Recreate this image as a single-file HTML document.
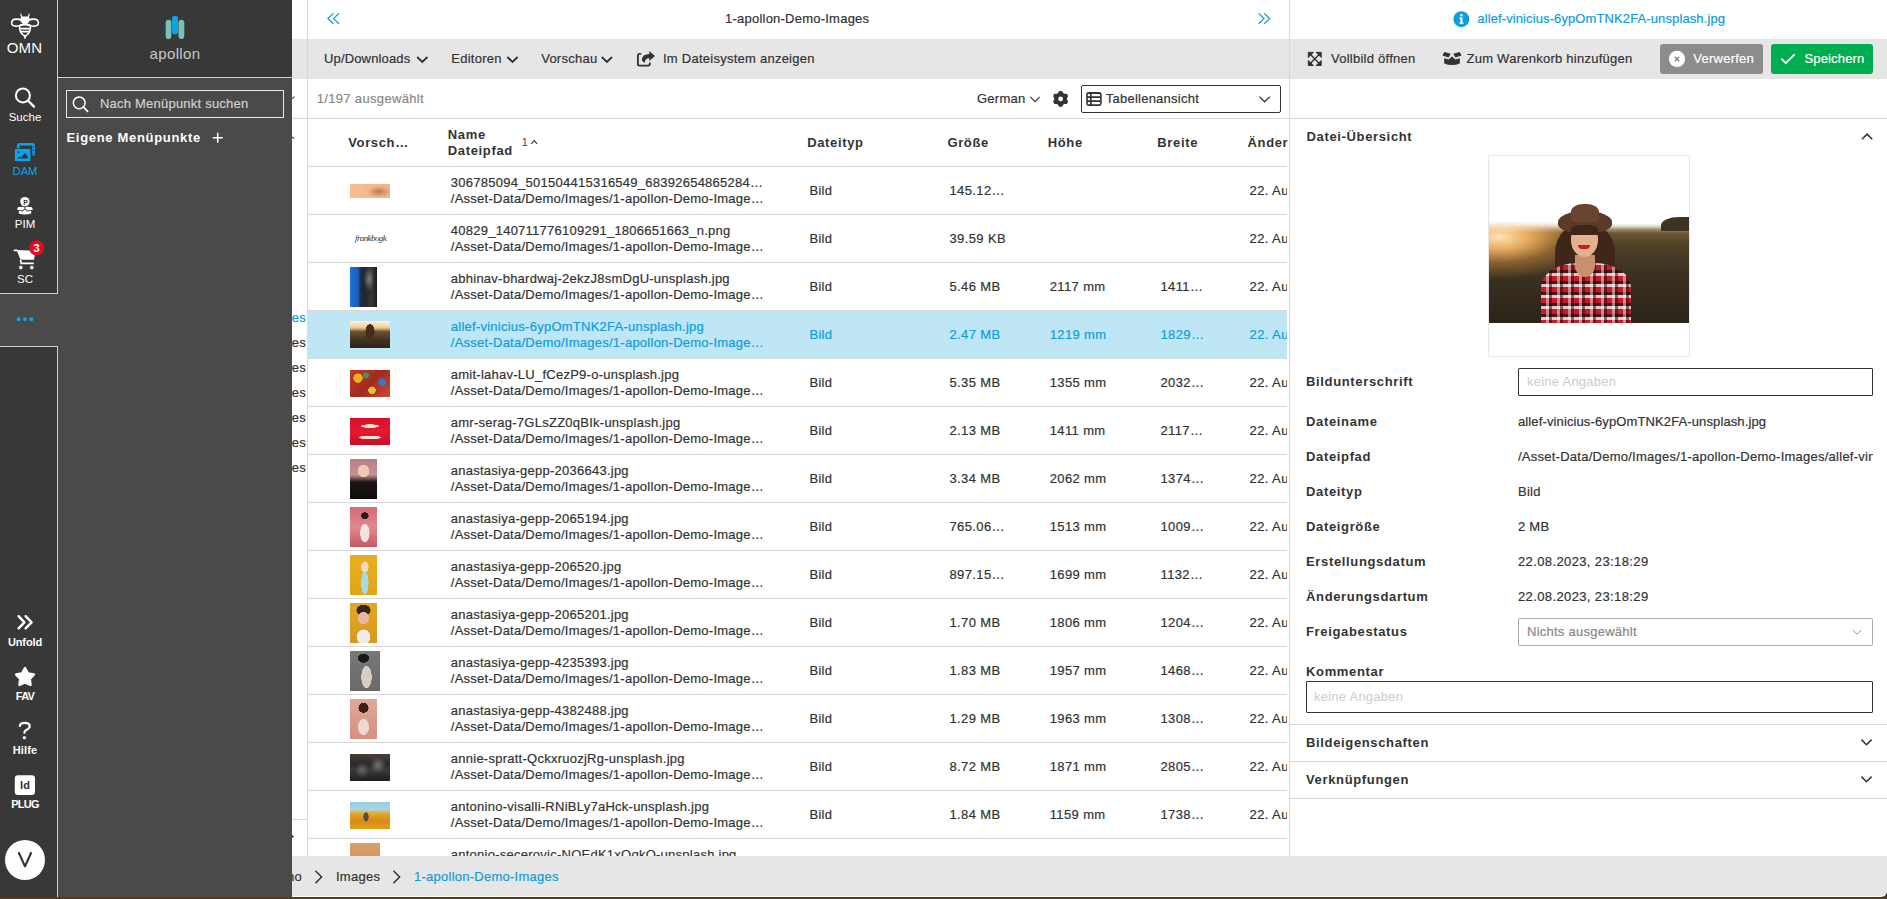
<!DOCTYPE html><html><head><meta charset="utf-8"><style>
*{box-sizing:border-box;margin:0;padding:0}
html,body{width:1887px;height:899px;overflow:hidden;background:#5a3822;font-family:"Liberation Sans",sans-serif;}
.a{position:absolute;white-space:nowrap;line-height:16px}
.t{font-size:13px;letter-spacing:.25px;color:#333;-webkit-text-stroke:.2px currentColor}
.n{font-size:13px;letter-spacing:.38px;color:#333;-webkit-text-stroke:.2px currentColor}
.b{font-size:13px;font-weight:bold;letter-spacing:.65px;color:#333}
.w{color:#fff}
.bl{color:#0e9ddd}
.g{color:#888}
svg{position:absolute;overflow:visible}
</style></head><body><div class="a" style="left:292px;top:0px;width:1595px;height:897px;background:#fff;border-bottom-right-radius:6px"></div>
<div class="a" style="left:292px;top:39px;width:1595px;height:40px;background:#e6e6e6;"></div>
<div class="a" style="left:292px;top:856px;width:1595px;height:40px;background:#e6e6e6;border-bottom-right-radius:6px"></div>
<div class="a" style="left:307px;top:0px;width:1px;height:856px;background:#d8d8d8;"></div>
<div class="a" style="left:1289px;top:0px;width:1px;height:856px;background:#d8d8d8;"></div>
<div class="a" style="left:292px;top:118px;width:1595px;height:1px;background:#d8d8d8;"></div>
<div class="a" style="left:307px;top:310px;width:980px;height:48px;background:#bee6f5;"></div>
<div class="a" style="left:307px;top:166px;width:980px;height:1px;background:#d8d8d8;"></div>
<div class="a" style="left:307px;top:214px;width:980px;height:1px;background:#d8d8d8;"></div>
<div class="a" style="left:307px;top:262px;width:980px;height:1px;background:#d8d8d8;"></div>
<div class="a" style="left:307px;top:310px;width:980px;height:1px;background:#d8d8d8;"></div>
<div class="a" style="left:307px;top:358px;width:980px;height:1px;background:#d8d8d8;"></div>
<div class="a" style="left:307px;top:406px;width:980px;height:1px;background:#d8d8d8;"></div>
<div class="a" style="left:307px;top:454px;width:980px;height:1px;background:#d8d8d8;"></div>
<div class="a" style="left:307px;top:502px;width:980px;height:1px;background:#d8d8d8;"></div>
<div class="a" style="left:307px;top:550px;width:980px;height:1px;background:#d8d8d8;"></div>
<div class="a" style="left:307px;top:598px;width:980px;height:1px;background:#d8d8d8;"></div>
<div class="a" style="left:307px;top:646px;width:980px;height:1px;background:#d8d8d8;"></div>
<div class="a" style="left:307px;top:694px;width:980px;height:1px;background:#d8d8d8;"></div>
<div class="a" style="left:307px;top:742px;width:980px;height:1px;background:#d8d8d8;"></div>
<div class="a" style="left:307px;top:790px;width:980px;height:1px;background:#d8d8d8;"></div>
<div class="a" style="left:307px;top:838px;width:980px;height:1px;background:#d8d8d8;"></div>
<div class="a" style="left:292px;top:819px;width:15px;height:1px;background:#d8d8d8;"></div>
<div class="a" style="left:0px;top:0px;width:58px;height:294px;background:#383838;border-right:1px solid #cfcfcf;border-bottom:1px solid #cfcfcf"></div>
<div class="a" style="left:58px;top:78px;width:234px;height:819px;background:#4a4a4a;"></div>
<div class="a" style="left:0px;top:294px;width:58px;height:52px;background:#4a4a4a;"></div>
<div class="a" style="left:58px;top:0px;width:234px;height:77px;background:#383838;"></div>
<div class="a" style="left:58px;top:77px;width:234px;height:1px;background:#cfcfcf;"></div>
<div class="a" style="left:0px;top:346px;width:58px;height:551px;background:#383838;border-right:1px solid #cfcfcf;border-top:1px solid #cfcfcf"></div>
<div class="a" style="left:66px;top:90px;width:218px;height:28px;background:transparent;border:1px solid #e8e8e8"></div>
<div class="a t" style="left:100px;top:95.5px;color:#d0d0d0;letter-spacing:.22px">Nach Menüpunkt suchen</div>
<div class="a b w" style="left:66.5px;top:129.5px;letter-spacing:.68px">Eigene Menüpunkte</div>
<div class="a t" style="left:725px;top:10.5px;letter-spacing:.23px">1-apollon-Demo-Images</div>
<div class="a t" style="left:324px;top:50.5px;letter-spacing:.15px">Up/Downloads</div>
<div class="a t" style="left:451.3px;top:50.5px;">Editoren</div>
<div class="a t" style="left:541.2px;top:50.5px;">Vorschau</div>
<div class="a t" style="left:663px;top:50.5px;">Im Dateisystem anzeigen</div>
<div class="a t g" style="left:316.7px;top:90.5px;letter-spacing:.34px">1/197 ausgewählt</div>
<div class="a t" style="left:977px;top:90.5px;">German</div>
<div class="a" style="left:1081px;top:85px;width:200px;height:28px;background:transparent;border:1px solid #333;border-radius:2px"></div>
<div class="a t" style="left:1105.7px;top:90.5px;">Tabellenansicht</div>
<div class="a b" style="left:348.2px;top:134.5px;">Vorsch…</div>
<div class="a b" style="left:447.8px;top:126.5px;">Name</div>
<div class="a b" style="left:447.8px;top:142.5px;">Dateipfad</div>
<div class="a" style="left:522px;top:137px;font-size:10px;color:#333;line-height:12px">1</div>
<div class="a b" style="left:807.2px;top:134.5px;">Dateityp</div>
<div class="a b" style="left:947.4px;top:134.5px;">Größe</div>
<div class="a b" style="left:1047.7px;top:134.5px;">Höhe</div>
<div class="a b" style="left:1157.3px;top:134.5px;">Breite</div>
<div class="a b" style="left:1247.5px;top:134.5px;width:40px;overflow:hidden">Änder</div>
<div class="a" style="left:307px;top:166px;width:980px;height:690px;overflow:hidden">
<div class="a t" style="left:143.8px;top:8.5px">306785094_501504415316549_68392654865284…</div>
<div class="a t" style="left:143.8px;top:24.5px">/Asset-Data/Demo/Images/1-apollon-Demo-Image…</div>
<div class="a t" style="left:502.5px;top:16.5px">Bild</div>
<div class="a n" style="left:642.5px;top:16.5px">145.12…</div>
<div class="a n" style="left:942.5999999999999px;top:16.5px">22. Au</div>
<div class="a t" style="left:143.8px;top:56.5px">40829_140711776109291_1806651663_n.png</div>
<div class="a t" style="left:143.8px;top:72.5px">/Asset-Data/Demo/Images/1-apollon-Demo-Image…</div>
<div class="a t" style="left:502.5px;top:64.5px">Bild</div>
<div class="a n" style="left:642.5px;top:64.5px">39.59 KB</div>
<div class="a n" style="left:942.5999999999999px;top:64.5px">22. Au</div>
<div class="a t" style="left:143.8px;top:104.5px">abhinav-bhardwaj-2ekzJ8smDgU-unsplash.jpg</div>
<div class="a t" style="left:143.8px;top:120.5px">/Asset-Data/Demo/Images/1-apollon-Demo-Image…</div>
<div class="a t" style="left:502.5px;top:112.5px">Bild</div>
<div class="a n" style="left:642.5px;top:112.5px">5.46 MB</div>
<div class="a n" style="left:742.7px;top:112.5px">2117 mm</div>
<div class="a n" style="left:853.5px;top:112.5px">1411…</div>
<div class="a n" style="left:942.5999999999999px;top:112.5px">22. Au</div>
<div class="a t bl" style="left:143.8px;top:152.5px">allef-vinicius-6ypOmTNK2FA-unsplash.jpg</div>
<div class="a t bl" style="left:143.8px;top:168.5px">/Asset-Data/Demo/Images/1-apollon-Demo-Image…</div>
<div class="a t bl" style="left:502.5px;top:160.5px">Bild</div>
<div class="a n bl" style="left:642.5px;top:160.5px">2.47 MB</div>
<div class="a n bl" style="left:742.7px;top:160.5px">1219 mm</div>
<div class="a n bl" style="left:853.5px;top:160.5px">1829…</div>
<div class="a n bl" style="left:942.5999999999999px;top:160.5px">22. Au</div>
<div class="a t" style="left:143.8px;top:200.5px">amit-lahav-LU_fCezP9-o-unsplash.jpg</div>
<div class="a t" style="left:143.8px;top:216.5px">/Asset-Data/Demo/Images/1-apollon-Demo-Image…</div>
<div class="a t" style="left:502.5px;top:208.5px">Bild</div>
<div class="a n" style="left:642.5px;top:208.5px">5.35 MB</div>
<div class="a n" style="left:742.7px;top:208.5px">1355 mm</div>
<div class="a n" style="left:853.5px;top:208.5px">2032…</div>
<div class="a n" style="left:942.5999999999999px;top:208.5px">22. Au</div>
<div class="a t" style="left:143.8px;top:248.5px">amr-serag-7GLsZZ0qBIk-unsplash.jpg</div>
<div class="a t" style="left:143.8px;top:264.5px">/Asset-Data/Demo/Images/1-apollon-Demo-Image…</div>
<div class="a t" style="left:502.5px;top:256.5px">Bild</div>
<div class="a n" style="left:642.5px;top:256.5px">2.13 MB</div>
<div class="a n" style="left:742.7px;top:256.5px">1411 mm</div>
<div class="a n" style="left:853.5px;top:256.5px">2117…</div>
<div class="a n" style="left:942.5999999999999px;top:256.5px">22. Au</div>
<div class="a t" style="left:143.8px;top:296.5px">anastasiya-gepp-2036643.jpg</div>
<div class="a t" style="left:143.8px;top:312.5px">/Asset-Data/Demo/Images/1-apollon-Demo-Image…</div>
<div class="a t" style="left:502.5px;top:304.5px">Bild</div>
<div class="a n" style="left:642.5px;top:304.5px">3.34 MB</div>
<div class="a n" style="left:742.7px;top:304.5px">2062 mm</div>
<div class="a n" style="left:853.5px;top:304.5px">1374…</div>
<div class="a n" style="left:942.5999999999999px;top:304.5px">22. Au</div>
<div class="a t" style="left:143.8px;top:344.5px">anastasiya-gepp-2065194.jpg</div>
<div class="a t" style="left:143.8px;top:360.5px">/Asset-Data/Demo/Images/1-apollon-Demo-Image…</div>
<div class="a t" style="left:502.5px;top:352.5px">Bild</div>
<div class="a n" style="left:642.5px;top:352.5px">765.06…</div>
<div class="a n" style="left:742.7px;top:352.5px">1513 mm</div>
<div class="a n" style="left:853.5px;top:352.5px">1009…</div>
<div class="a n" style="left:942.5999999999999px;top:352.5px">22. Au</div>
<div class="a t" style="left:143.8px;top:392.5px">anastasiya-gepp-206520.jpg</div>
<div class="a t" style="left:143.8px;top:408.5px">/Asset-Data/Demo/Images/1-apollon-Demo-Image…</div>
<div class="a t" style="left:502.5px;top:400.5px">Bild</div>
<div class="a n" style="left:642.5px;top:400.5px">897.15…</div>
<div class="a n" style="left:742.7px;top:400.5px">1699 mm</div>
<div class="a n" style="left:853.5px;top:400.5px">1132…</div>
<div class="a n" style="left:942.5999999999999px;top:400.5px">22. Au</div>
<div class="a t" style="left:143.8px;top:440.5px">anastasiya-gepp-2065201.jpg</div>
<div class="a t" style="left:143.8px;top:456.5px">/Asset-Data/Demo/Images/1-apollon-Demo-Image…</div>
<div class="a t" style="left:502.5px;top:448.5px">Bild</div>
<div class="a n" style="left:642.5px;top:448.5px">1.70 MB</div>
<div class="a n" style="left:742.7px;top:448.5px">1806 mm</div>
<div class="a n" style="left:853.5px;top:448.5px">1204…</div>
<div class="a n" style="left:942.5999999999999px;top:448.5px">22. Au</div>
<div class="a t" style="left:143.8px;top:488.5px">anastasiya-gepp-4235393.jpg</div>
<div class="a t" style="left:143.8px;top:504.5px">/Asset-Data/Demo/Images/1-apollon-Demo-Image…</div>
<div class="a t" style="left:502.5px;top:496.5px">Bild</div>
<div class="a n" style="left:642.5px;top:496.5px">1.83 MB</div>
<div class="a n" style="left:742.7px;top:496.5px">1957 mm</div>
<div class="a n" style="left:853.5px;top:496.5px">1468…</div>
<div class="a n" style="left:942.5999999999999px;top:496.5px">22. Au</div>
<div class="a t" style="left:143.8px;top:536.5px">anastasiya-gepp-4382488.jpg</div>
<div class="a t" style="left:143.8px;top:552.5px">/Asset-Data/Demo/Images/1-apollon-Demo-Image…</div>
<div class="a t" style="left:502.5px;top:544.5px">Bild</div>
<div class="a n" style="left:642.5px;top:544.5px">1.29 MB</div>
<div class="a n" style="left:742.7px;top:544.5px">1963 mm</div>
<div class="a n" style="left:853.5px;top:544.5px">1308…</div>
<div class="a n" style="left:942.5999999999999px;top:544.5px">22. Au</div>
<div class="a t" style="left:143.8px;top:584.5px">annie-spratt-QckxruozjRg-unsplash.jpg</div>
<div class="a t" style="left:143.8px;top:600.5px">/Asset-Data/Demo/Images/1-apollon-Demo-Image…</div>
<div class="a t" style="left:502.5px;top:592.5px">Bild</div>
<div class="a n" style="left:642.5px;top:592.5px">8.72 MB</div>
<div class="a n" style="left:742.7px;top:592.5px">1871 mm</div>
<div class="a n" style="left:853.5px;top:592.5px">2805…</div>
<div class="a n" style="left:942.5999999999999px;top:592.5px">22. Au</div>
<div class="a t" style="left:143.8px;top:632.5px">antonino-visalli-RNiBLy7aHck-unsplash.jpg</div>
<div class="a t" style="left:143.8px;top:648.5px">/Asset-Data/Demo/Images/1-apollon-Demo-Image…</div>
<div class="a t" style="left:502.5px;top:640.5px">Bild</div>
<div class="a n" style="left:642.5px;top:640.5px">1.84 MB</div>
<div class="a n" style="left:742.7px;top:640.5px">1159 mm</div>
<div class="a n" style="left:853.5px;top:640.5px">1738…</div>
<div class="a n" style="left:942.5999999999999px;top:640.5px">22. Au</div>
<div class="a t" style="left:143.8px;top:680.5px">antonio-secerovic-NOEdK1xOqkQ-unsplash.jpg</div>
<div class="a t" style="left:143.8px;top:696.5px">/Asset-Data/Demo/Images/1-apollon-Demo-Image…</div>
<div class="a t" style="left:502.5px;top:688.5px">Bild</div>
</div>
<div class="a" style="left:292px;top:0;width:15px;height:856px;overflow:hidden">
<div class="a t bl" style="right:1px;top:309.5px">ages</div>
<div class="a t" style="right:1px;top:334.5px">ages</div>
<div class="a t" style="right:1px;top:359.5px">ages</div>
<div class="a t" style="right:1px;top:384.5px">ages</div>
<div class="a t" style="right:1px;top:409.5px">ages</div>
<div class="a t" style="right:1px;top:434.5px">ages</div>
<div class="a t" style="right:1px;top:459.5px">ages</div>
</div>
<div class="a" style="left:292px;top:856px;width:20px;height:40px;overflow:hidden"><div class="a t" style="right:10px;top:12.5px">Demo</div></div>
<div class="a t" style="left:336px;top:868.5px;">Images</div>
<div class="a t bl" style="left:414px;top:868.5px;">1-apollon-Demo-Images</div>
<div class="a t bl" style="left:1477.3px;top:10.5px;letter-spacing:.11px">allef-vinicius-6ypOmTNK2FA-unsplash.jpg</div>
<div class="a t" style="left:1331px;top:50.5px;">Vollbild öffnen</div>
<div class="a t" style="left:1466.5px;top:50.5px;">Zum Warenkorb hinzufügen</div>
<div class="a" style="left:1660px;top:44px;width:103px;height:30px;background:#8c8c8c;border-radius:3px"></div>
<div class="a" style="left:1771px;top:44px;width:102px;height:30px;background:#00ad50;border-radius:3px"></div>
<div class="a t w" style="left:1693.3px;top:50.5px;">Verwerfen</div>
<div class="a t w" style="left:1804.5px;top:50.5px;letter-spacing:.15px">Speichern</div>
<div class="a b" style="left:1306.5px;top:128.5px;">Datei-Übersicht</div>
<div class="a" style="left:1488px;top:155px;width:202px;height:202px;background:#fff;border:1px solid #e6e6e6;border-radius:2px"></div>
<div class="a b" style="left:1306px;top:373.5px;">Bildunterschrift</div>
<div class="a b" style="left:1306px;top:413.5px;">Dateiname</div>
<div class="a b" style="left:1306px;top:448.5px;">Dateipfad</div>
<div class="a b" style="left:1306px;top:483.5px;">Dateityp</div>
<div class="a b" style="left:1306px;top:518.5px;">Dateigröße</div>
<div class="a b" style="left:1306px;top:553.5px;">Erstellungsdatum</div>
<div class="a b" style="left:1306px;top:588.5px;">Änderungsdartum</div>
<div class="a b" style="left:1306px;top:623.5px;">Freigabestatus</div>
<div class="a b" style="left:1306px;top:663.5px;">Kommentar</div>
<div class="a" style="left:1518px;top:368px;width:355px;height:28px;background:#fff;border:1px solid #333;border-radius:1px"></div>
<div class="a t" style="left:1527px;top:373.5px;color:#cbcbcb;-webkit-text-stroke:0">keine Angaben</div>
<div class="a t" style="left:1518px;top:413.5px;letter-spacing:.12px">allef-vinicius-6ypOmTNK2FA-unsplash.jpg</div>
<div class="a t" style="left:1518px;top:448.5px;width:355px;overflow:hidden">/Asset-Data/Demo/Images/1-apollon-Demo-Images/allef-vinicius-6ypOmTNK2FA-unsplash.jpg</div>
<div class="a t" style="left:1518px;top:483.5px;">Bild</div>
<div class="a t" style="left:1518px;top:518.5px;">2 MB</div>
<div class="a n" style="left:1518px;top:553.5px;">22.08.2023, 23:18:29</div>
<div class="a n" style="left:1518px;top:588.5px;">22.08.2023, 23:18:29</div>
<div class="a" style="left:1518px;top:618px;width:355px;height:28px;background:#fff;border:1px solid #aaa;border-radius:2px"></div>
<div class="a t" style="left:1527px;top:623.5px;color:#888">Nichts ausgewählt</div>
<div class="a" style="left:1306px;top:681px;width:567px;height:32px;background:#fff;border:1px solid #333;border-radius:1px"></div>
<div class="a t" style="left:1314px;top:688.5px;color:#cbcbcb;-webkit-text-stroke:0">keine Angaben</div>
<div class="a" style="left:1289px;top:724px;width:598px;height:1px;background:#d8d8d8;"></div>
<div class="a b" style="left:1306px;top:734.5px;">Bildeigenschaften</div>
<div class="a" style="left:1289px;top:761px;width:598px;height:1px;background:#d8d8d8;"></div>
<div class="a b" style="left:1306px;top:771.5px;">Verknüpfungen</div>
<div class="a" style="left:1289px;top:798px;width:598px;height:1px;background:#d8d8d8;"></div>
<div class="a" style="left:-5.5px;width:60px;text-align:center;top:40.1px;font-size:15px;font-weight:normal;color:#fff;letter-spacing:0.2px">OMN</div>
<div class="a" style="left:-5px;width:60px;text-align:center;top:108.7px;font-size:11.5px;font-weight:normal;color:#fff;letter-spacing:0px">Suche</div>
<div class="a" style="left:-5px;width:60px;text-align:center;top:162.7px;font-size:11.2px;font-weight:normal;color:#0aa3ef;letter-spacing:0px">DAM</div>
<div class="a" style="left:-5px;width:60px;text-align:center;top:216.3px;font-size:11.5px;font-weight:normal;color:#fff;letter-spacing:0px">PIM</div>
<div class="a" style="left:-5px;width:60px;text-align:center;top:270.5px;font-size:11.5px;font-weight:normal;color:#fff;letter-spacing:0px">SC</div>
<div class="a" style="left:-5px;width:60px;text-align:center;top:633.5px;font-size:11px;font-weight:bold;color:#fff;letter-spacing:-0.1px">Unfold</div>
<div class="a" style="left:-5px;width:60px;text-align:center;top:687.5px;font-size:11px;font-weight:bold;color:#fff;letter-spacing:-0.7px">FAV</div>
<div class="a" style="left:-5px;width:60px;text-align:center;top:741.9px;font-size:11px;font-weight:bold;color:#fff;letter-spacing:0.1px">Hilfe</div>
<div class="a" style="left:-5px;width:60px;text-align:center;top:795.8px;font-size:11px;font-weight:bold;color:#fff;letter-spacing:-0.8px">PLUG</div>
<div class="a" style="left:135px;width:80px;text-align:center;top:45.5px;font-size:15px;color:#c8c8c8;letter-spacing:.35px">apollon</div>
<div class="a" style="left:307px;top:166px;width:980px;height:690px;overflow:hidden">
<div class="a" style="left:43px;top:18px;width:40px;height:14px;background:radial-gradient(ellipse 30% 40% at 72% 55%,rgba(120,70,40,.5),rgba(0,0,0,0)),linear-gradient(90deg,#f7be92,#f3b283)"></div>
<div class="a" style="left:43px;top:101px;width:27px;height:40px;background:radial-gradient(ellipse 20% 30% at 70% 30%,rgba(180,170,160,.6),rgba(0,0,0,0)),linear-gradient(90deg,#1d74d8 0,#1a5eb8 30%,#1d2a48 40%,#27252c 60%,#3a3638 80%,#1a1a1e 100%)"></div>
<div class="a" style="left:43px;top:155px;width:40px;height:27px;background:radial-gradient(ellipse 16% 40% at 50% 40%,#4a2a1c 70%,rgba(0,0,0,0) 72%),linear-gradient(180deg,#fdf4ea 0,#f2c890 25%,#6a5030 40%,#3e3222 70%,#2e2418 100%)"></div>
<div class="a" style="left:43px;top:204px;width:40px;height:27px;background:radial-gradient(circle at 20% 30%,#e8b020 0 12%,rgba(0,0,0,0) 13%),radial-gradient(circle at 80% 45%,#2f7ad0 0 10%,rgba(0,0,0,0) 11%),radial-gradient(circle at 55% 75%,#e0c030 0 12%,rgba(0,0,0,0) 13%),radial-gradient(circle at 40% 20%,#3a9a50 0 9%,rgba(0,0,0,0) 10%),linear-gradient(135deg,#c83a28,#a02a20 50%,#d04a30)"></div>
<div class="a" style="left:43px;top:252px;width:40px;height:27px;background:radial-gradient(ellipse 40% 12% at 50% 30%,#f4e0d0 50%,rgba(0,0,0,0) 60%),radial-gradient(ellipse 50% 12% at 50% 72%,#f4e0d0 50%,rgba(0,0,0,0) 60%),linear-gradient(180deg,#d80f28,#e41a30 50%,#c80e24)"></div>
<div class="a" style="left:43px;top:293px;width:27px;height:40px;background:radial-gradient(ellipse 35% 25% at 50% 30%,#f0c8b8 60%,rgba(0,0,0,0) 64%),linear-gradient(180deg,#b88088 0,#c89090 40%,#1c1414 58%,#0e0c0c 100%)"></div>
<div class="a" style="left:43px;top:341px;width:27px;height:40px;background:radial-gradient(ellipse 30% 40% at 55% 65%,#f4e4e0 55%,rgba(0,0,0,0) 60%),radial-gradient(ellipse 22% 14% at 55% 22%,#2a1a18 60%,rgba(0,0,0,0) 65%),linear-gradient(180deg,#d86878,#e08890 50%,#c85868)"></div>
<div class="a" style="left:43px;top:389px;width:27px;height:40px;background:radial-gradient(ellipse 22% 45% at 55% 70%,#a8d8e8 60%,rgba(0,0,0,0) 64%),radial-gradient(ellipse 22% 22% at 55% 30%,#f0d8c8 60%,rgba(0,0,0,0) 64%),linear-gradient(180deg,#e8b020,#e0a418)"></div>
<div class="a" style="left:43px;top:437px;width:27px;height:40px;background:radial-gradient(ellipse 40% 30% at 50% 85%,#f0ece8 60%,rgba(0,0,0,0) 64%),radial-gradient(ellipse 32% 25% at 50% 38%,#e8b8a0 60%,rgba(0,0,0,0) 64%),radial-gradient(ellipse 42% 22% at 50% 18%,#3a2418 60%,rgba(0,0,0,0) 64%),linear-gradient(180deg,#e0a828,#d89820)"></div>
<div class="a" style="left:43px;top:485px;width:30px;height:40px;background:radial-gradient(ellipse 28% 45% at 55% 65%,#d8ccc0 60%,rgba(0,0,0,0) 64%),radial-gradient(ellipse 30% 18% at 45% 18%,#1a1818 60%,rgba(0,0,0,0) 64%),linear-gradient(180deg,#787878,#6a6a6a)"></div>
<div class="a" style="left:43px;top:533px;width:27px;height:40px;background:radial-gradient(ellipse 35% 35% at 50% 70%,#f0d8d0 55%,rgba(0,0,0,0) 60%),radial-gradient(ellipse 30% 20% at 50% 22%,#3a2018 60%,rgba(0,0,0,0) 64%),linear-gradient(180deg,#e0a898,#d49080)"></div>
<div class="a" style="left:43px;top:588px;width:40px;height:27px;background:radial-gradient(ellipse 20% 30% at 70% 40%,rgba(160,160,160,.6),rgba(0,0,0,0)),radial-gradient(ellipse 18% 30% at 30% 60%,rgba(130,130,140,.6),rgba(0,0,0,0)),linear-gradient(180deg,#4a4038 0,#2a2a2a 35%,#3a3a3a 60%,#1e1e1e 100%)"></div>
<div class="a" style="left:43px;top:636px;width:40px;height:27px;background:radial-gradient(ellipse 12% 30% at 40% 55%,#5a4a40 50%,rgba(0,0,0,0) 60%),linear-gradient(180deg,#98cce0 0,#a8d4e4 28%,#e8a828 42%,#d88a18 70%,#e0a020 100%)"></div>
<div class="a" style="left:43px;top:677px;width:30px;height:40px;background:linear-gradient(180deg,#d8a068 0,#c88850 100%)"></div>
<div class="a" style="left:48px;top:64px;font-size:9px;font-style:italic;color:#333;letter-spacing:-.6px;font-family:Liberation Serif">frankbogk</div>
</div>
<div class="a" style="left:1489px;top:189px;width:200px;height:134px;overflow:hidden;background:#fff">
<div class="a" style="left:0;top:34px;width:200px;height:100px;background:linear-gradient(180deg,rgba(150,110,60,0) 0,#7a6038 6%,#4e4026 22%,#3c3222 50%,#2c2419 100%)"></div>
<div class="a" style="left:-60px;top:0;width:200px;height:120px;background:radial-gradient(ellipse 50% 35% at 35% 40%,rgba(255,228,180,1) 0%,rgba(245,180,100,.9) 30%,rgba(210,140,60,.5) 60%,rgba(200,120,50,0) 100%)"></div>
<div class="a" style="left:0;top:0;width:200px;height:44px;background:linear-gradient(180deg,#fff 0,#fff 72%,rgba(255,255,255,0) 100%)"></div>
<div class="a" style="left:172px;top:28px;width:30px;height:14px;border-radius:60% 0 0 0;background:#3e3222"></div>
<div class="a" style="left:66px;top:34px;width:60px;height:66px;border-radius:45% 45% 35% 35%;background:#3e2618"></div>
<div class="a" style="left:52px;top:74px;width:90px;height:62px;border-radius:40% 40% 0 0;background:repeating-linear-gradient(90deg,rgba(0,0,0,.0) 0 5px,rgba(255,255,255,.45) 5px 8px,rgba(40,0,0,.5) 8px 11px),repeating-linear-gradient(0deg,#c41c28 0 5px,#e0c8c8 5px 8px,#481418 8px 11px)"></div>
<div class="a" style="left:86px;top:66px;width:20px;height:22px;border-radius:0 0 50% 50%;background:#c89070"></div>
<div class="a" style="left:82px;top:34px;width:27px;height:34px;border-radius:45% 45% 50% 50%;background:#e6b090"></div>
<div class="a" style="left:89px;top:56px;width:12px;height:4px;border-radius:0 0 6px 6px;background:#c02028"></div>
<div class="a" style="left:69px;top:22px;width:54px;height:22px;border-radius:50% 50% 40% 40%;background:#5a3a28"></div>
<div class="a" style="left:82px;top:15px;width:28px;height:18px;border-radius:45% 45% 20% 20%;background:#6a4430"></div>
<div class="a" style="left:82px;top:36px;width:27px;height:10px;background:#3e2618;border-radius:40% 40% 0 0"></div>
</div>
<svg class="a" style="left:0;top:0" width="1887" height="899" viewBox="0 0 1887 899"><g fill="none" stroke="#fff" stroke-width="1.6"><path d="M24.6,22.3 C21,18.5 12,17.5 11.6,22.6 C11.4,27 19,27.5 24.6,23.2"/><path d="M25.4,22.3 C29,18.5 38,17.5 38.4,22.6 C38.6,27 31,27.5 25.4,23.2"/><path d="M19.6,25.5 C19,31 21.5,35 25,36 C28.5,35 31,31 30.4,25.5 C28,24.3 22,24.3 19.6,25.5Z"/></g><path fill="#fff" d="M21,13.3 L22.3,16.6 L27.7,16.6 L29,13.3 L29.8,14 L28.9,17.3 C30.2,18.5 30.3,20.8 28.6,22.4 L25,24.3 L21.4,22.4 C19.7,20.8 19.8,18.5 21.1,17.3 L20.2,14Z"/><path stroke="#fff" stroke-width="1.6" d="M20.2,28.6 H29.8 M20.8,31.6 H29.2"/><path fill="#fff" d="M23.4,35.5 L26.6,35.5 L25.6,38.8 L24.4,38.8Z"/><circle cx="22.9" cy="95.4" r="7" fill="none" stroke="#fff" stroke-width="2"/><path d="M28,100.6 L34,106.6" stroke="#fff" stroke-width="2.2" stroke-linecap="round"/><path fill="none" stroke="#0aa3ef" stroke-width="2.6" d="M18.2,148.2 V145.6 Q18.2,144.2 19.6,144.2 H32.2 Q33.6,144.2 33.6,145.6 V155.6"/><g fill="#383838"><circle cx="33.6" cy="146.6" r=".7"/><circle cx="33.6" cy="150.3" r=".7"/><circle cx="33.6" cy="153.9" r=".7"/></g><rect x="14.9" y="148.9" width="15.5" height="12.2" fill="#0aa3ef"/><path fill="#383838" d="M17.2,158.6 L19.2,156.2 L21,157.4 L24.9,152.9 L27.9,156.2 L27.9,158.6Z"/><circle cx="18.4" cy="152.2" r="1" fill="#383838"/><circle cx="24.9" cy="201.6" r="4.7" fill="#fff"/><text x="23.2" y="204.6" font-size="7" font-weight="bold" fill="#383838" font-family="Liberation Sans">P</text><path fill="#fff" d="M18.2,207 L23.5,206.8 L24.9,208 L22.5,210.4 L16.9,209.8Z M31.6,207 L26.3,206.8 L24.9,208 L27.3,210.4 L33.1,209.8Z"/><path fill="#fff" d="M18.8,210.8 L22.5,211.6 L24.9,209.6 L27.3,211.6 L31.2,210.8 L31.2,213.6 Q25,215.6 18.8,213.6Z"/><path d="M14.4,250.3 H17.3" stroke="#fff" stroke-width="1.8" stroke-linecap="round"/><path fill="#fff" d="M16.6,250 L35.4,250.8 L34,259.8 L20.5,259.8Z"/><path d="M20.5,259.8 L21.2,263.4 H33.8" fill="none" stroke="#fff" stroke-width="1.8"/><circle cx="20.8" cy="267.6" r="1.8" fill="#fff"/><circle cx="31.8" cy="267.6" r="1.8" fill="#fff"/><circle cx="36.6" cy="247.8" r="7.6" fill="#e30b1f"/><text x="36.6" y="251.6" font-size="11" font-weight="bold" fill="#fff" text-anchor="middle" font-family="Liberation Sans">3</text><g fill="#0aa3ef"><circle cx="18.6" cy="319.3" r="2"/><circle cx="25" cy="319.3" r="2"/><circle cx="31.3" cy="319.3" r="2"/></g><path d="M18.6,616.2 L24.4,622.3 L18.6,628.4 M25.6,616.2 L31.6,622.3 L25.6,628.4" fill="none" stroke="#fff" stroke-width="2.4" stroke-linecap="round" stroke-linejoin="round"/><polygon points="25.00,668.00 27.94,673.35 33.94,674.50 29.76,678.95 30.53,685.00 25.00,682.40 19.47,685.00 20.24,678.95 16.06,674.50 22.06,673.35" fill="#fff" stroke="#fff" stroke-width="2.4" stroke-linejoin="round"/><path d="M19.9,726 C19.9,723.7 22,722.8 24.8,722.8 C27.8,722.8 29.7,724.1 29.7,726.3 C29.7,728.3 28,729.2 26.3,729.9 C24.8,730.6 24.4,731.5 24.4,732.8" fill="none" stroke="#fff" stroke-width="2.2" stroke-linecap="round"/><circle cx="24.4" cy="737.7" r="1.6" fill="#fff"/><rect x="14.8" y="775.2" width="20.2" height="19.8" rx="3.2" fill="#fff"/><text x="25" y="789.4" font-size="11" font-weight="bold" fill="#333" text-anchor="middle" font-family="Liberation Sans">Id</text><circle cx="25" cy="860" r="20" fill="#fff"/><path d="M18.6,852.2 L25,866.4 L31.4,852.2" fill="none" stroke="#333" stroke-width="2.1" stroke-linejoin="round"/><rect x="165.7" y="19.8" width="5.6" height="19.2" rx="2.8" fill="#7cc0b4"/><rect x="178.5" y="19.8" width="5.8" height="19.2" rx="2.9" fill="#7cc0b4"/><rect x="171.9" y="15.8" width="6.1" height="18.6" rx="3" fill="#0ba3e0"/><circle cx="79.2" cy="102.8" r="5.9" fill="none" stroke="#fff" stroke-width="1.5"/><path d="M83.4,107 L87.6,111.4" stroke="#fff" stroke-width="1.7" stroke-linecap="round"/><path d="M217.7,132.8 V142.8 M212.7,137.8 H222.7" stroke="#fff" stroke-width="1.5"/><path d="M333.4,13.4 L328,18.6 L333.4,23.8 M339,13.4 L333.6,18.6 L339,23.8" fill="none" stroke="#0e9ddd" stroke-width="1.3"/><path d="M1258.6,13.4 L1264,18.6 L1258.6,23.8 M1264.2,13.4 L1269.6,18.6 L1264.2,23.8" fill="none" stroke="#0e9ddd" stroke-width="1.3"/><path d="M417.2,57 L422.29999999999995,62 L427.4,57" fill="none" stroke="#333" stroke-width="1.9"/><path d="M507.40000000000003,57 L512.5,62 L517.6,57" fill="none" stroke="#333" stroke-width="1.9"/><path d="M601.8,57 L606.9,62 L612,57" fill="none" stroke="#333" stroke-width="1.9"/><path d="M640.5,53.9 H639.6 Q637.9,53.9 637.9,55.6 V64 Q637.9,65.6 639.6,65.6 H648.1 Q649.8,65.6 649.8,64 V63.2" fill="none" stroke="#333" stroke-width="1.8" stroke-linecap="round"/><path fill="#333" d="M649.3,51 L655,56.1 L649.3,61 L649.3,58.3 Q645,58.3 644.8,62.7 Q641.6,61.5 641.9,59 Q642.6,54.2 649.3,54Z"/><path d="M1030.4,96.8 L1035,101.6 L1039.6,96.8" fill="none" stroke="#333" stroke-width="1.1"/><g fill="#333"><polygon points="1059.63,91.56 1061.57,91.56 1062.82,93.54 1064.13,94.30 1066.47,94.40 1067.44,96.07 1066.35,98.14 1066.35,99.66 1067.44,101.73 1066.47,103.40 1064.13,103.50 1062.82,104.26 1061.57,106.24 1059.63,106.24 1058.38,104.26 1057.07,103.50 1054.73,103.40 1053.76,101.73 1054.85,99.66 1054.85,98.14 1053.76,96.07 1054.73,94.40 1057.07,94.30 1058.38,93.54" stroke="#333" stroke-width="1.2" stroke-linejoin="round"/></g><circle cx="1060.6" cy="98.9" r="2.4" fill="#fff"/><rect x="1086.2" y="92.1" width="15.5" height="13.8" rx="2.4" fill="#333"/><g fill="#fff"><rect x="1087.8" y="94.1" width="2.2" height="2.2" rx=".5"/><rect x="1087.8" y="98" width="2.2" height="2.2" rx=".5"/><rect x="1087.8" y="102" width="2.2" height="2.2" rx=".5"/><rect x="1091.6" y="94.1" width="8.5" height="2.2" rx=".6"/><rect x="1091.6" y="98" width="8.5" height="2.2" rx=".6"/><rect x="1091.6" y="102" width="8.5" height="2.2" rx=".6"/></g><path d="M1259.4,96.6 L1264.6,101.8 L1269.8,96.6" fill="none" stroke="#333" stroke-width="1.3"/><path d="M531.3,143.8 L534.2,140.6 L537.1,143.8" fill="none" stroke="#333" stroke-width="1.1"/><path d="M292,98.6 L294.5,96.6" stroke="#333" stroke-width="1.1"/><path d="M292,136.8 L294,138.6" stroke="#333" stroke-width="1.1"/><path d="M292,835 L294,836.6 L292,838.2" fill="#333"/><path d="M315.4,870.8 L321.6,877 L315.4,883.2 M393.4,870.8 L399.6,877 L393.4,883.2" fill="none" stroke="#333" stroke-width="1.5"/><circle cx="1461.4" cy="19.2" r="8" fill="#0e9ddd"/><rect x="1460.4" y="17.6" width="2.1" height="6" fill="#fff"/><circle cx="1461.45" cy="15.3" r="1.25" fill="#fff"/><rect x="1459.4" y="17.6" width="2" height="1.2" fill="#fff"/><rect x="1459.4" y="22.6" width="4.1" height="1.2" fill="#fff"/><g fill="#333" stroke="#333" stroke-width="1" stroke-linejoin="round"><path d="M1308.3,52.4 H1313.3 L1308.3,57.4Z"/><path d="M1321.2,52.4 H1316.2 L1321.2,57.4Z"/><path d="M1308.3,65.5 H1313.3 L1308.3,60.5Z"/><path d="M1321.2,65.5 H1316.2 L1321.2,60.5Z"/></g><path d="M1310.5,54.6 L1319,63.3 M1319,54.6 L1310.5,63.3" stroke="#333" stroke-width="1.4"/><path fill="#333" d="M1442.4,55.5 L1444.3,51.9 L1450.7,53.7 L1448.6,57.6Z M1461.6,55.5 L1459.7,51.9 L1453.3,53.7 L1455.4,57.6Z"/><path fill="#333" d="M1444.2,58.2 L1448.6,59.6 L1452,56.4 L1455.4,59.6 L1459.8,58.2 L1459.8,63.4 Q1452,66.6 1444.2,63.4Z"/><circle cx="1677" cy="58.9" r="8.1" fill="#fff"/><path d="M1674.8,56.7 L1679.2,61.1 M1679.2,56.7 L1674.8,61.1" stroke="#8c8c8c" stroke-width="1.5"/><path d="M1781.4,58.6 L1785.8,63.2 L1794.8,54.2" fill="none" stroke="#fff" stroke-width="1.9"/><path d="M1862,139.2 L1867.1,134.1 L1872.2,139.2" fill="none" stroke="#333" stroke-width="1.5"/><path d="M1861.4,739.6 L1866.5,744.7 L1871.6,739.6" fill="none" stroke="#333" stroke-width="1.5"/><path d="M1861.4,776.6 L1866.5,781.7 L1871.6,776.6" fill="none" stroke="#333" stroke-width="1.5"/><path d="M1852.6,629.8 L1857,634.2 L1861.4,629.8" fill="none" stroke="#999" stroke-width="1"/></svg></body></html>
